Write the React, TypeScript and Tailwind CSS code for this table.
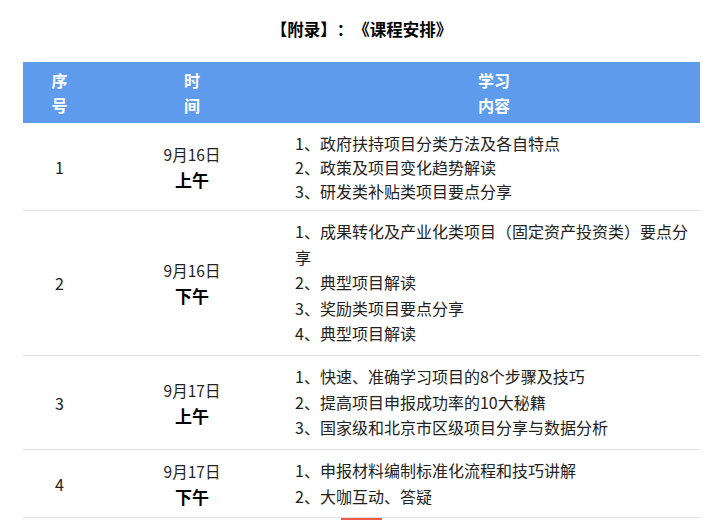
const rows = [
  {
    no: "1",
    date: "9月16日",
    half: "上午",
    h: "h-[88px]",
    lh: "leading-[24px]",
    items: [
      "1、政府扶持项目分类方法及各自特点",
      "2、政策及项目变化趋势解读",
      "3、研发类补贴类项目要点分享",
    ],
  },
  {
    no: "2",
    date: "9月16日",
    half: "下午",
    h: "h-[145px]",
    lh: "leading-[25.5px]",
    items: [
      "1、成果转化及产业化类项目（固定资产投资类）要点分享",
      "2、典型项目解读",
      "3、奖励类项目要点分享",
      "4、典型项目解读",
    ],
  },
  {
    no: "3",
    date: "9月17日",
    half: "上午",
    h: "h-[94px]",
    lh: "leading-[25.5px]",
    items: [
      "1、快速、准确学习项目的8个步骤及技巧",
      "2、提高项目申报成功率的10大秘籍",
      "3、国家级和北京市区级项目分享与数据分析",
    ],
  },
  {
    no: "4",
    date: "9月17日",
    half: "下午",
    h: "h-[68px]",
    lh: "leading-[25.5px]",
    items: ["1、申报材料编制标准化流程和技巧讲解", "2、大咖互动、答疑"],
  },
];

export default function App() {
  return (
    <div className="min-h-[520px] bg-white font-['Microsoft_YaHei','Noto_Sans_CJK_SC',sans-serif] text-[#222] [text-spacing-trim:space-all]">
      <h1 className="pt-[17px] text-center text-[16.5px] font-bold leading-[24px] text-black">
        【附录】：《课程安排》
      </h1>

      <div className="mx-auto mt-[21px] w-[677px]">
        <div className="grid h-[61px] grid-cols-[73px_192px_412px] items-center bg-[#5f9bed] text-center text-[16px] font-bold leading-[25px] text-white">
          <div>
            序<br />号
          </div>
          <div>
            时<br />间
          </div>
          <div>
            学习<br />内容
          </div>
        </div>

        {rows.map((r) => (
          <div
            key={r.no}
            className={`grid grid-cols-[73px_192px_412px] items-center border-b border-[#e0e0e0] ${r.h}`}
          >
            <div className="text-center text-[16px]">{r.no}</div>
            <div className="text-center">
              <div className="text-[15.5px] leading-[25px]">{r.date}</div>
              <div className="text-[17px] font-bold leading-[25px] text-black">
                {r.half}
              </div>
            </div>
            <div className={`pl-[7px] pr-[8px] text-[16px] ${r.lh}`}>
              {r.items.map((t) => (
                <p key={t}>{t}</p>
              ))}
            </div>
          </div>
        ))}
      </div>

      <div className="ml-[341px] h-[2px] w-[41px] bg-[#ef5a4a]" />
    </div>
  );
}
